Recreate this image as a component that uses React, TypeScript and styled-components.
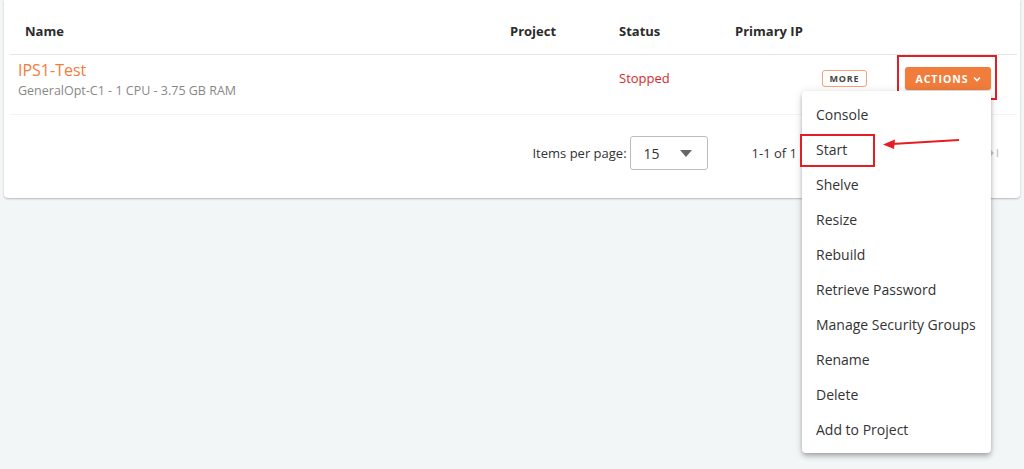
import React from "react"
import styled, { createGlobalStyle } from "styled-components"

const GlobalStyle = createGlobalStyle`
  html, body {
    margin: 0;
    padding: 0;
    background: #f3f6f7;
    font-family: "Open Sans", "Liberation Sans", sans-serif;
    color: #333;
  }
`

const menuItems = [
  "Console",
  "Start",
  "Shelve",
  "Resize",
  "Rebuild",
  "Retrieve Password",
  "Manage Security Groups",
  "Rename",
  "Delete",
  "Add to Project",
]

const App: React.FC = () => {
  return (
    <Page>
      <GlobalStyle />
      <Card>
        <HeaderRow>
          <HeaderCell $indent={15}>Name</HeaderCell>
          <HeaderCell>Project</HeaderCell>
          <HeaderCell>Status</HeaderCell>
          <HeaderCell>Primary IP</HeaderCell>
          <HeaderCell />
        </HeaderRow>
        <DataRow>
          <NameCell>
            <InstanceName>IPS1-Test</InstanceName>
            <Flavor>GeneralOpt-C1 - 1 CPU - 3.75 GB RAM</Flavor>
          </NameCell>
          <div />
          <Status>Stopped</Status>
          <div />
          <ActionsCell>
            <MoreButton>MORE</MoreButton>
            <ActionsWrap>
              <ActionsButton>
                ACTIONS
                <svg width="8" height="6" viewBox="0 0 8 6">
                  <path d="M1 1.5 L4 4.5 L7 1.5" fill="none" stroke="#fff" strokeWidth="1.6" />
                </svg>
              </ActionsButton>
              <Highlight $top={-12} $left={-8} $right={-6} $bottom={-10} />
              <Menu>
                {menuItems.map(item => (
                  <MenuItem key={item}>
                    {item}
                    {item === "Start" && (
                      <>
                        <Highlight $top={2} $left={-2} $width={75} $height={33} />
                        <Arrow width="80" height="14" viewBox="0 0 80 14">
                          <path d="M77 3 L10 7" stroke="#e31e24" strokeWidth="2" />
                          <path d="M1 7.5 L13 2.5 L12 12 Z" fill="#e31e24" />
                        </Arrow>
                      </>
                    )}
                  </MenuItem>
                ))}
              </Menu>
            </ActionsWrap>
          </ActionsCell>
        </DataRow>
        <Paginator>
          <PageLabel>Items per page:</PageLabel>
          <PageSelect>
            <span>15</span>
            <svg width="12" height="7" viewBox="0 0 12 7">
              <path d="M0 0 L12 0 L6 7 Z" fill="#666" />
            </svg>
          </PageSelect>
          <RangeLabel>1-1 of 1</RangeLabel>
          <NavButtons>
            <NavIcon viewBox="0 0 12 12">
              <path d="M2 2 V10 M10 2 L5 6 L10 10" fill="none" stroke="#ccc" strokeWidth="1.5" />
            </NavIcon>
            <NavIcon viewBox="0 0 12 12">
              <path d="M8 2 L4 6 L8 10" fill="none" stroke="#ccc" strokeWidth="1.5" />
            </NavIcon>
            <NavIcon viewBox="0 0 12 12">
              <path d="M4 2 L8 6 L4 10" fill="none" stroke="#ccc" strokeWidth="1.5" />
            </NavIcon>
            <NavIcon viewBox="0 0 12 12">
              <path d="M3 3 L6 6 L3 9 Z" fill="#ccc" />
              <path d="M9.5 2 V10" stroke="#ccc" strokeWidth="1.5" />
            </NavIcon>
          </NavButtons>
        </Paginator>
      </Card>
    </Page>
  )
}

export default App

const Page = styled.div`
  width: 1024px;
  height: 469px;
  padding: 0 4px;
  box-sizing: border-box;
  overflow: hidden;
`

const Card = styled.div`
  background: #fff;
  border-radius: 0 0 4px 4px;
  box-shadow: 0 1px 2px rgba(0, 0, 0, 0.25);
  padding: 0 3px 0 6px;
  height: 198px;
  box-sizing: border-box;
`

const columns = `500px 109px 116px 87px 1fr`

const HeaderRow = styled.div`
  display: grid;
  grid-template-columns: ${columns};
  height: 55px;
  align-items: center;
  padding-top: 7px;
  box-sizing: border-box;
  border-bottom: 1px solid #e6e6e6;
`

const HeaderCell = styled.div<{ $indent?: number }>`
  font-size: 13px;
  font-weight: 700;
  color: #2b2b2b;
  padding-left: ${p => p.$indent ?? 0}px;
`

const DataRow = styled.div`
  display: grid;
  grid-template-columns: ${columns};
  height: 60px;
  border-bottom: 1px solid #f3f3f3;
  box-sizing: border-box;
`

const NameCell = styled.div`
  padding: 4px 0 0 8px;
  display: flex;
  flex-direction: column;
`

const InstanceName = styled.div`
  font-size: 16px;
  line-height: 22px;
  color: #f47c3c;
`

const Flavor = styled.div`
  font-size: 12.5px;
  line-height: 20px;
  color: #888;
`

const Status = styled.div`
  font-size: 13px;
  color: #d9262b;
  padding-top: 14px;
`

const ActionsCell = styled.div`
  display: flex;
  align-items: flex-start;
  padding-top: 12px;
  gap: 38px;
`

const MoreButton = styled.div`
  margin-top: 3px;
  width: 45px;
  height: 17px;
  box-sizing: border-box;
  border: 1px solid #f4a27a;
  border-radius: 3px;
  font-size: 9px;
  font-weight: 700;
  letter-spacing: 0.8px;
  color: #444;
  display: flex;
  align-items: center;
  justify-content: center;
`

const ActionsWrap = styled.div`
  position: relative;
`

const ActionsButton = styled.div`
  width: 86px;
  height: 23px;
  border-radius: 3px;
  background: #f07d3c;
  color: #fff;
  font-size: 10.5px;
  font-weight: 700;
  letter-spacing: 1px;
  display: flex;
  align-items: center;
  justify-content: center;
  gap: 4px;
  box-shadow: 0 1px 2px rgba(0, 0, 0, 0.15);
`

const Highlight = styled.div<{
  $top: number
  $left: number
  $right?: number
  $bottom?: number
  $width?: number
  $height?: number
}>`
  position: absolute;
  top: ${p => p.$top}px;
  left: ${p => p.$left}px;
  ${p => (p.$right !== undefined ? `right: ${p.$right}px;` : "")}
  ${p => (p.$bottom !== undefined ? `bottom: ${p.$bottom}px;` : "")}
  ${p => (p.$width !== undefined ? `width: ${p.$width}px;` : "")}
  ${p => (p.$height !== undefined ? `height: ${p.$height}px;` : "")}
  border: 2px solid #e31e24;
  box-sizing: border-box;
  pointer-events: none;
`

const Menu = styled.div`
  position: absolute;
  top: calc(100% + 1px);
  right: 0;
  width: 189px;
  padding: 6px 0;
  background: #fff;
  border-radius: 4px;
  box-shadow: 0 2px 4px -1px rgba(0, 0, 0, 0.2), 0 4px 5px rgba(0, 0, 0, 0.14),
    0 1px 10px rgba(0, 0, 0, 0.12);
  z-index: 5;
`

const MenuItem = styled.div`
  position: relative;
  height: 35px;
  line-height: 35px;
  padding-left: 14px;
  font-size: 14px;
  color: #333;
  white-space: nowrap;
`

const Arrow = styled.svg`
  position: absolute;
  left: 80px;
  top: 5px;
`

const Paginator = styled.div`
  display: flex;
  align-items: center;
  justify-content: flex-end;
  height: 88px;
  padding-bottom: 12px;
  box-sizing: border-box;
  padding-right: 17px;
`

const PageLabel = styled.div`
  font-size: 13px;
  color: #333;
  margin-right: 3px;
`

const PageSelect = styled.div`
  width: 78px;
  height: 34px;
  box-sizing: border-box;
  border: 1px solid #bdbdbd;
  border-radius: 3px;
  display: flex;
  align-items: center;
  justify-content: space-between;
  padding: 0 15px 0 13px;
  font-size: 14px;
  color: #333;
`

const RangeLabel = styled.div`
  font-size: 13px;
  color: #333;
  margin-left: 44px;
  margin-right: 35px;
`

const NavButtons = styled.div`
  display: flex;
  gap: 40px;
`

const NavIcon = styled.svg`
  width: 12px;
  height: 12px;
`
